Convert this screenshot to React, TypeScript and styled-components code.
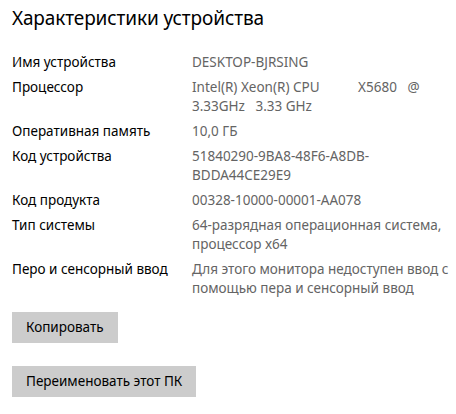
import React from "react";
import styled, { createGlobalStyle } from "styled-components";

const Global = createGlobalStyle`
  html, body { margin: 0; padding: 0; background: #ffffff; }
  body { font-family: "Noto Sans", "Open Sans", "DejaVu Sans", sans-serif; }
`;

const Page = styled.div`
  width: 456px;
  height: 414px;
  box-sizing: border-box;
  padding: 3px 12px 0 12px;
  background: #ffffff;
  overflow: hidden;
`;

const Title = styled.h1`
  margin: 0;
  font-size: 19px;
  font-weight: 400;
  line-height: 30px;
  color: #000000;
  letter-spacing: -0.1px;
`;

const Specs = styled.div`
  margin-top: 20px;
  display: grid;
  grid-template-columns: 180px 1fr;
  row-gap: 6px;
  font-size: 13.5px;
  line-height: 19px;
`;

const Label = styled.div`
  color: #000000;
`;

const Value = styled.div`
  color: #646464;
  white-space: pre;
`;

const Actions = styled.div`
  margin-top: 14px;
  display: flex;
  flex-direction: column;
  align-items: flex-start;
  gap: 23px;
`;

const Button = styled.button`
  height: 31px;
  padding: 0 14px;
  border: none;
  background: #cccccc;
  color: #000000;
  font-family: inherit;
  font-size: 13.5px;
  line-height: 31px;
  cursor: pointer;
`;

const specs: { label: string; lines: string[] }[] = [
  { label: "Имя устройства", lines: ["DESKTOP-BJRSING"] },
  { label: "Процессор", lines: ["Intel(R) Xeon(R) CPU           X5680   @", "3.33GHz   3.33 GHz"] },
  { label: "Оперативная память", lines: ["10,0 ГБ"] },
  { label: "Код устройства", lines: ["51840290-9BA8-48F6-A8DB-", "BDDA44CE29E9"] },
  { label: "Код продукта", lines: ["00328-10000-00001-AA078"] },
  { label: "Тип системы", lines: ["64-разрядная операционная система,", "процессор x64"] },
  { label: "Перо и сенсорный ввод", lines: ["Для этого монитора недоступен ввод с", "помощью пера и сенсорный ввод"] },
];

export default function App() {
  return (
    <>
      <Global />
      <Page>
        <Title>Характеристики устройства</Title>
        <Specs>
          {specs.map((s) => (
            <React.Fragment key={s.label}>
              <Label>{s.label}</Label>
              <Value>{s.lines.join("\n")}</Value>
            </React.Fragment>
          ))}
        </Specs>
        <Actions>
          <Button>Копировать</Button>
          <Button>Переименовать этот ПК</Button>
        </Actions>
      </Page>
    </>
  );
}
